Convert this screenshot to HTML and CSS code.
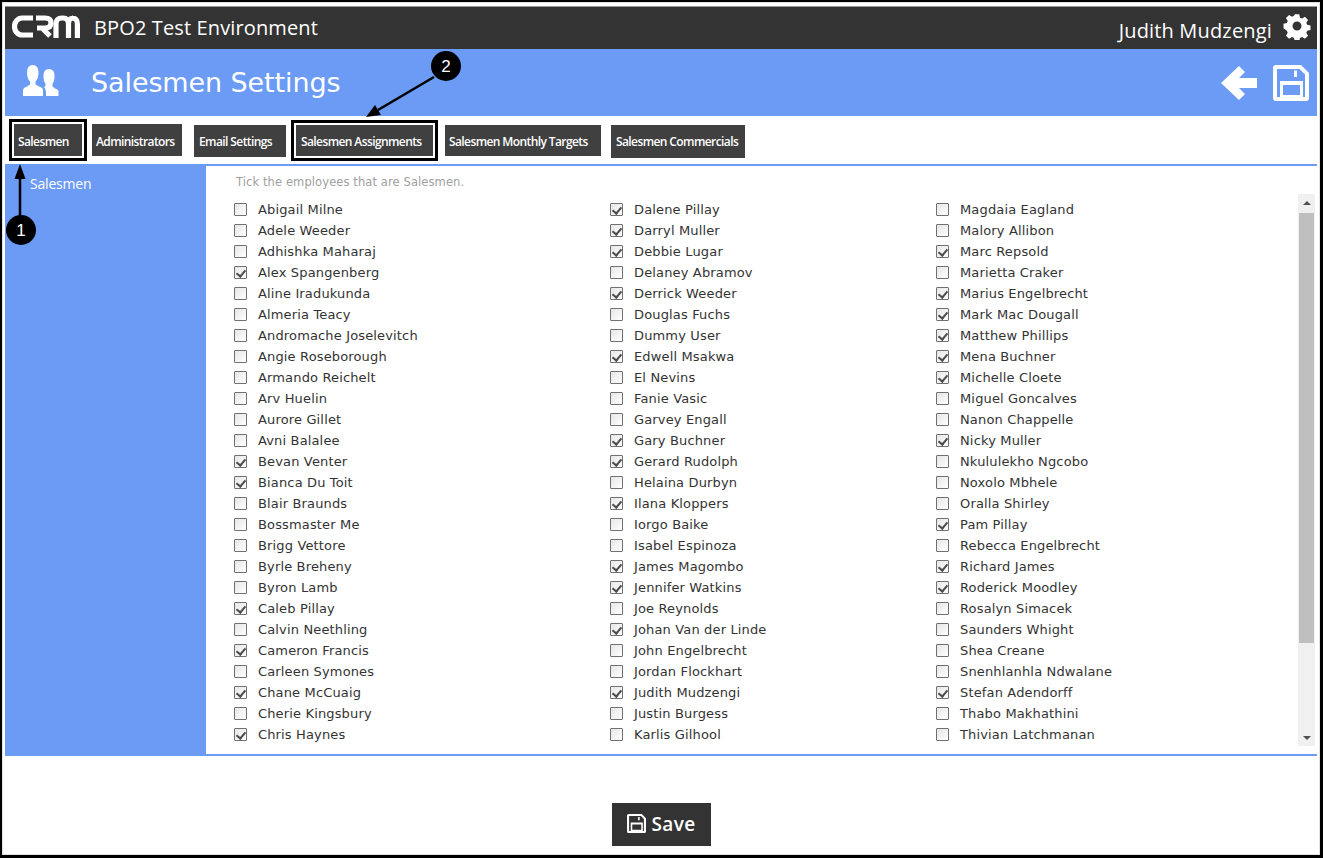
FILE: index.html
```html
<!DOCTYPE html>
<html lang="en">
<head>
<meta charset="utf-8">
<title>Salesmen Settings</title>
<link rel="stylesheet" href="styles.css">
</head>
<body>
<div class="frame">
  <header class="topbar">
    <svg class="logo" viewBox="0 0 68 23" aria-label="CRM"><g fill="none" stroke="#fff" stroke-width="5.2"><path d="M21 3H10A7.500 8.500 0 0 0 10 20H21"/><path d="M24 3H33Q39 3 39 8T33 13H25M30 13L38 21"/><path d="M44 23V9Q44 3 50 3H51Q56.500 3 56.500 9V23M56.500 9Q56.500 3 61 3H60Q65.400 3 65.400 9V23"/></g></svg>
    <span class="env">BPO2 Test Environment</span>
    <span class="user">Judith Mudzengi</span>
    <svg class="gear" viewBox="0 0 28 28"><path fill="#fff" fill-rule="evenodd" d="M11.500 1h5l.8 3.700 2.300 1 3.200-2 3.500 3.500-2 3.200 1 2.300 3.700.8v5l-3.700.8-1 2.300 2 3.200-3.500 3.500-3.200-2-2.300 1-.8 3.700h-5l-.8-3.700-2.300-1-3.200 2-3.500-3.500 2-3.200-1-2.300L-1 16.500v-5l3.700-.8 1-2.300-2-3.200 3.500-3.500 3.200 2 2.300-1zM14 9a5 5 0 1 0 0 10 5 5 0 0 0 0-10z" transform="translate(1.400 1.400) scale(.9)"/></svg>
  </header>
  <section class="titlebar">
    <svg class="people" viewBox="0 0 36 32"><path fill="#fff" d="M0 31V25.500Q0 22.500 4 21.500L7 19.500V16.500Q4 13.500 4 7.500Q4 0 9.750 0T15.500 7.500Q15.500 13.500 12.500 16.500V19.500L16 21.500Q20 22.500 20 25.500V31Z"/><path fill="#fff" d="M23 31H35.500V26.500Q35.500 24.500 32 23.500L29.500 21.500V18.500Q31.500 16.500 31.500 11Q31.500 4 26 4T20.500 11Q20.500 16.500 22.500 18.500V21L21 22Q23 24 23 27Z"/></svg>
    <h1 class="title">Salesmen Settings</h1>
    <div class="title-actions">
      <svg class="back" viewBox="0 0 36 36"><path fill="#fff" d="M18 1l6 6-6 6h18v10H18l6 6-6 6L0 18z"/></svg>
      <svg class="disk" viewBox="0 0 36 36"><path fill="#fff" fill-rule="evenodd" d="M3 0h25l8 8v25a3 3 0 0 1-3 3H3a3 3 0 0 1-3-3V3a3 3 0 0 1 3-3zM4 4v28h3V16h23v16h2V9.500L26.500 4zM21 5.500h3V12h-3zM10 20v10h17V20z"/></svg>
    </div>
  </section>
  <nav class="tabs">
    <a class="tab tab-salesmen marked">Salesmen</a>
    <a class="tab tab-admin">Administrators</a>
    <a class="tab tab-email">Email Settings</a>
    <a class="tab tab-assign marked">Salesmen Assignments</a>
    <a class="tab tab-targets">Salesmen Monthly Targets</a>
    <a class="tab tab-comm">Salesmen Commercials</a>
  </nav>
  <main class="panel">
    <aside class="sidebar">Salesmen</aside>
    <section class="content">
      <p class="hint">Tick the employees that are Salesmen.</p>
      <div class="list-wrap">
        <div class="list">
          <div class="col col-1">
            <label class="row"><input type="checkbox">Abigail Milne</label>
            <label class="row"><input type="checkbox">Adele Weeder</label>
            <label class="row"><input type="checkbox">Adhishka Maharaj</label>
            <label class="row"><input type="checkbox" checked>Alex Spangenberg</label>
            <label class="row"><input type="checkbox">Aline Iradukunda</label>
            <label class="row"><input type="checkbox">Almeria Teacy</label>
            <label class="row"><input type="checkbox">Andromache Joselevitch</label>
            <label class="row"><input type="checkbox">Angie Roseborough</label>
            <label class="row"><input type="checkbox">Armando Reichelt</label>
            <label class="row"><input type="checkbox">Arv Huelin</label>
            <label class="row"><input type="checkbox">Aurore Gillet</label>
            <label class="row"><input type="checkbox">Avni Balalee</label>
            <label class="row"><input type="checkbox" checked>Bevan Venter</label>
            <label class="row"><input type="checkbox" checked>Bianca Du Toit</label>
            <label class="row"><input type="checkbox">Blair Braunds</label>
            <label class="row"><input type="checkbox">Bossmaster Me</label>
            <label class="row"><input type="checkbox">Brigg Vettore</label>
            <label class="row"><input type="checkbox">Byrle Breheny</label>
            <label class="row"><input type="checkbox">Byron Lamb</label>
            <label class="row"><input type="checkbox" checked>Caleb Pillay</label>
            <label class="row"><input type="checkbox">Calvin Neethling</label>
            <label class="row"><input type="checkbox" checked>Cameron Francis</label>
            <label class="row"><input type="checkbox">Carleen Symones</label>
            <label class="row"><input type="checkbox" checked>Chane McCuaig</label>
            <label class="row"><input type="checkbox">Cherie Kingsbury</label>
            <label class="row"><input type="checkbox" checked>Chris Haynes</label>
          </div>
          <div class="col col-2">
            <label class="row"><input type="checkbox" checked>Dalene Pillay</label>
            <label class="row"><input type="checkbox" checked>Darryl Muller</label>
            <label class="row"><input type="checkbox" checked>Debbie Lugar</label>
            <label class="row"><input type="checkbox">Delaney Abramov</label>
            <label class="row"><input type="checkbox" checked>Derrick Weeder</label>
            <label class="row"><input type="checkbox">Douglas Fuchs</label>
            <label class="row"><input type="checkbox">Dummy User</label>
            <label class="row"><input type="checkbox" checked>Edwell Msakwa</label>
            <label class="row"><input type="checkbox">El Nevins</label>
            <label class="row"><input type="checkbox">Fanie Vasic</label>
            <label class="row"><input type="checkbox">Garvey Engall</label>
            <label class="row"><input type="checkbox" checked>Gary Buchner</label>
            <label class="row"><input type="checkbox" checked>Gerard Rudolph</label>
            <label class="row"><input type="checkbox">Helaina Durbyn</label>
            <label class="row"><input type="checkbox" checked>Ilana Kloppers</label>
            <label class="row"><input type="checkbox">Iorgo Baike</label>
            <label class="row"><input type="checkbox">Isabel Espinoza</label>
            <label class="row"><input type="checkbox" checked>James Magombo</label>
            <label class="row"><input type="checkbox" checked>Jennifer Watkins</label>
            <label class="row"><input type="checkbox">Joe Reynolds</label>
            <label class="row"><input type="checkbox" checked>Johan Van der Linde</label>
            <label class="row"><input type="checkbox">John Engelbrecht</label>
            <label class="row"><input type="checkbox">Jordan Flockhart</label>
            <label class="row"><input type="checkbox" checked>Judith Mudzengi</label>
            <label class="row"><input type="checkbox">Justin Burgess</label>
            <label class="row"><input type="checkbox">Karlis Gilhool</label>
          </div>
          <div class="col col-3">
            <label class="row"><input type="checkbox">Magdaia Eagland</label>
            <label class="row"><input type="checkbox">Malory Allibon</label>
            <label class="row"><input type="checkbox" checked>Marc Repsold</label>
            <label class="row"><input type="checkbox">Marietta Craker</label>
            <label class="row"><input type="checkbox" checked>Marius Engelbrecht</label>
            <label class="row"><input type="checkbox" checked>Mark Mac Dougall</label>
            <label class="row"><input type="checkbox" checked>Matthew Phillips</label>
            <label class="row"><input type="checkbox" checked>Mena Buchner</label>
            <label class="row"><input type="checkbox" checked>Michelle Cloete</label>
            <label class="row"><input type="checkbox">Miguel Goncalves</label>
            <label class="row"><input type="checkbox">Nanon Chappelle</label>
            <label class="row"><input type="checkbox" checked>Nicky Muller</label>
            <label class="row"><input type="checkbox">Nkululekho Ngcobo</label>
            <label class="row"><input type="checkbox">Noxolo Mbhele</label>
            <label class="row"><input type="checkbox">Oralla Shirley</label>
            <label class="row"><input type="checkbox" checked>Pam Pillay</label>
            <label class="row"><input type="checkbox">Rebecca Engelbrecht</label>
            <label class="row"><input type="checkbox" checked>Richard James</label>
            <label class="row"><input type="checkbox" checked>Roderick Moodley</label>
            <label class="row"><input type="checkbox">Rosalyn Simacek</label>
            <label class="row"><input type="checkbox">Saunders Whight</label>
            <label class="row"><input type="checkbox">Shea Creane</label>
            <label class="row"><input type="checkbox">Snenhlanhla Ndwalane</label>
            <label class="row"><input type="checkbox" checked>Stefan Adendorff</label>
            <label class="row"><input type="checkbox">Thabo Makhathini</label>
            <label class="row"><input type="checkbox">Thivian Latchmanan</label>
          </div>
        </div>
        <div class="scrollbar">
          <span class="arrow arrow-up"></span>
          <span class="track"><span class="thumb"></span></span>
          <span class="arrow arrow-down"></span>
        </div>
      </div>
    </section>
  </main>
  <footer class="footer">
    <button class="save" type="button">
      <svg class="save-icon" viewBox="0 0 36 36"><path fill="#fff" fill-rule="evenodd" d="M3 0h25l8 8v25a3 3 0 0 1-3 3H3a3 3 0 0 1-3-3V3a3 3 0 0 1 3-3zM4 4v28h3V16h23v16h2V9.500L26.500 4zM21 5.500h3V12h-3zM10 20v10h17V20z"/></svg>
      Save
    </button>
  </footer>
</div>
<svg class="callouts" viewBox="0 0 1323 858">
  <g stroke="#000" stroke-width="2.500" fill="#000">
    <path d="M20 218V178" fill="none"/>
    <path d="M20 164l-5.500 15h11z" stroke="none"/>
    <path d="M434 77L378 110" fill="none"/>
    <path d="M366 117l9-12 6 10z" stroke="none"/>
  </g>
  <circle cx="21" cy="230" r="15" fill="#000"/>
  <circle cx="446" cy="66" r="15" fill="#000"/>
  <text x="21" y="236" class="callout-num">1</text>
  <text x="446" y="72" class="callout-num">2</text>
</svg>
</body>
</html>
```
FILE: styles.css
```css
* { box-sizing: border-box; }
html, body { margin: 0; padding: 0; background: #fff; }
body {
  width: 1323px;
  height: 858px;
  overflow: hidden;
  position: relative;
  font-family: "DejaVu Sans", Verdana, sans-serif;
}
.frame {
  width: 1323px;
  height: 858px;
  border: solid #000;
  border-width: 2px 3px 3px 2px;
  padding: 5px 3px 0 3px;
  display: flex;
  flex-direction: column;
  box-shadow: inset 0 0 0 1px #e2e2e2;
}
.topbar {
  height: 42px;
  background: #333;
  box-shadow: 0 -1px 0 #999;
  display: flex;
  align-items: flex-start;
  color: #fff;
  padding: 0 6px 0 7px;
  flex: none;
}
.logo { width: 68px; height: 23px; margin-top: 8px; flex: none; }
.env {
  font-family: "Open Sans", sans-serif;
  font-size: 20px;
  line-height: 27px;
  margin: 7px 0 0 14px;
  letter-spacing: .13px;
}
.user {
  font-family: "Open Sans", sans-serif;
  font-size: 20px;
  line-height: 27px;
  margin: 10px 0 0 auto;
  letter-spacing: .17px;
}
.gear { width: 28px; height: 28px; margin: 5px 0 0 11px; flex: none; }
.titlebar {
  height: 67px;
  background: #6b9bf4;
  display: flex;
  align-items: center;
  color: #fff;
  padding: 0 8px 0 18px;
  flex: none;
}
.people { width: 36px; height: 32px; margin-bottom: 4px; flex: none; }
.title {
  margin: 0 0 0 32px;
  font-size: 27px;
  font-weight: 400;
  letter-spacing: -.1px;
}
.title-actions { margin-left: auto; display: flex; align-items: center; gap: 16px; }
.back { width: 36px; height: 36px; display: block; }
.disk { width: 36px; height: 36px; display: block; }
.tabs {
  height: 48px;
  display: flex;
  align-items: flex-start;
  flex: none;
  position: relative;
}
.tab {
  display: block;
  background: #404040;
  color: #fff;
  font-family: "Open Sans", sans-serif;
  font-size: 12px;
  line-height: 16px;
  font-weight: 600;
  white-space: nowrap;
  letter-spacing: -.6px;
  padding: 9px 0 0 5px;
}
.tab.marked { outline: 3px solid #000; outline-offset: 2px; box-shadow: 0 0 0 2px #fff; }
.tab-salesmen { width: 68px; height: 32px; margin: 8px 0 0 9px; padding: 10px 0 0 4px; }
.tab-admin { width: 90px; height: 32px; margin: 8px 0 0 10px; padding: 10px 0 0 4px; }
.tab-email { width: 92px; height: 32px; margin: 9px 0 0 12px; }
.tab-assign { width: 137px; height: 31px; margin: 9px 0 0 10px; }
.tab-targets { width: 156px; height: 31px; margin: 9px 0 0 12px; padding-left: 4px; }
.tab-comm { width: 134px; height: 33px; margin: 9px 0 0 10px; }
.panel {
  height: 592px;
  display: flex;
  flex: none;
  border-top: 2px solid #6b9bf4;
  border-bottom: 2px solid #6b9bf4;
}
.sidebar {
  width: 201px;
  background: #6b9bf4;
  color: #fff;
  font-family: "Open Sans", sans-serif;
  font-size: 14px;
  padding: 8px 0 0 25px;
  letter-spacing: -.2px;
  flex: none;
}
.content { flex: 1; padding: 10px 2px 0 0; min-width: 0; display: flex; flex-direction: column; }
.hint {
  margin: 0 0 0 30px;
  height: 18px;
  font-size: 11.500px;
  line-height: 13px;
  color: #a0a0a0;
  font-weight: 400;
  letter-spacing: .1px;
}
.list-wrap { display: flex; justify-content: space-between; height: 552px; }
.list { display: flex; padding: 5px 0 0 28px; }
.col { display: flex; flex-direction: column; }
.col-1 { width: 376px; }
.col-2 { width: 325px; margin-left: 0; }
.col-3 { width: 300px; margin-left: 1px; }
.row {
  height: 21px;
  display: flex;
  align-items: center;
  font-size: 13px;
  color: #333;
  white-space: nowrap;
  letter-spacing: .15px;
}
.row input {
  appearance: none;
  -webkit-appearance: none;
  width: 13px;
  height: 13px;
  margin: 0 10px 0 0;
  border: 1px solid #707070;
  border-radius: 1px;
  background: linear-gradient(135deg, #e6e6e6, #fff);
  position: relative;
  flex: none;
}
.col .row input { margin-right: 11px; }
.row input:checked::after {
  content: "";
  position: absolute;
  left: 3px;
  top: 1px;
  width: 4px;
  height: 7px;
  border: solid #4d4d4d;
  border-width: 0 2px 2px 0;
  transform: rotate(40deg);
}
.scrollbar {
  width: 17px;
  height: 552px;
  background: #f0f0f0;
  display: flex;
  flex-direction: column;
  flex: none;
}
.arrow { height: 17px; display: flex; align-items: center; justify-content: center; flex: none; }
.arrow::before { content: ""; border: 4px solid transparent; }
.arrow-up::before { border-bottom: 4px solid #505050; border-top: 0; }
.arrow-down::before { border-top: 4px solid #505050; border-bottom: 0; }
.track { flex: 1; padding: 2px 1px 0; }
.thumb { display: block; height: 430px; background: #bfbfbf; }
.footer {
  flex: 1;
  display: flex;
  justify-content: center;
  align-items: flex-start;
  padding: 47px 0 0 0;
}
.save {
  width: 99px;
  height: 43px;
  background: #333;
  color: #fff;
  border: 0;
  font-family: "Open Sans", sans-serif;
  font-size: 19px;
  line-height: 40px;
  font-weight: 600;
  letter-spacing: .3px;
  display: flex;
  align-items: center;
  justify-content: center;
  gap: 6px;
  padding: 0 0 2px;
}
.save-icon { width: 19px; height: 19px; }
.callouts {
  position: absolute;
  left: 0;
  top: 0;
  width: 1323px;
  height: 858px;
  pointer-events: none;
}
.callout-num {
  fill: #fff;
  font-family: "Liberation Sans", sans-serif;
  font-size: 17px;
  text-anchor: middle;
}
```
